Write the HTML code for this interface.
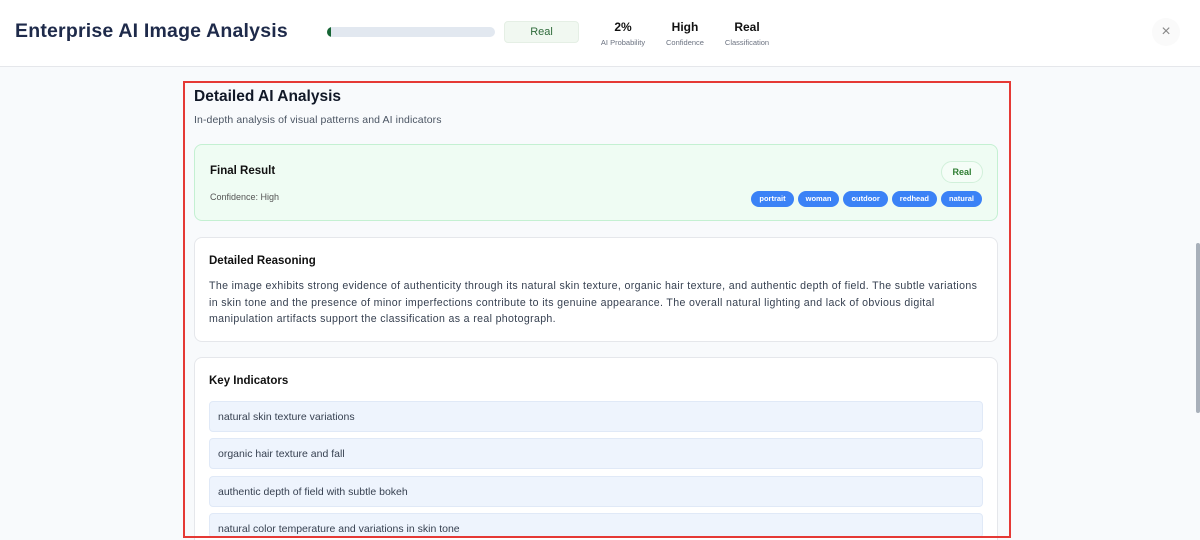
<!DOCTYPE html>
<html style="width:1200px;height:540px;overflow:hidden"><head><style>
*{box-sizing:border-box;margin:0;padding:0}
body{width:1200px;height:540px;overflow:hidden;background:#f8fafc;font-family:"Liberation Sans",sans-serif;color:#1f2937;position:relative}
.hdr{position:absolute;left:0;top:0;width:1200px;height:67px;background:#fff;border-bottom:1px solid #e5e7eb}
.abs{position:absolute}
.title{left:15px;top:20px;font-size:19.5px;font-weight:bold;color:#1e2a4a;letter-spacing:0.2px}
.bar{left:327px;top:27px;width:168px;height:10px;background:#e2e8f0;border-radius:5px;overflow:hidden}
.bar i{display:block;width:4px;height:10px;background:#166534}
.pill{left:504px;top:21px;width:75px;height:22px;background:#f1f8f1;border:1px solid #e5efe5;border-radius:4px;font-size:11px;color:#2f6b3b;text-align:center;line-height:20px}
.stat{top:20px;text-align:center;width:70px}
.stat b{display:block;font-size:12px;color:#111}
.stat span{display:block;font-size:7.5px;color:#6b7280;margin-top:4px}
.box{left:183px;top:81px;width:828px;height:457px;border:2px solid #e53935}
.card{position:absolute;left:194px;width:804px;border-radius:8px;overflow:hidden}
.tag{display:inline-block;background:#3b82f6;color:#fff;font-size:7.5px;font-weight:bold;border-radius:8px;padding:0 8px;height:16px;line-height:16px;margin-left:4px}
.ind{position:absolute;left:209px;width:774px;height:31px;background:#eef4fd;border:1px solid #e0e9f7;border-radius:4px;font-size:10.5px;color:#374151;padding-left:8px;line-height:30px}
</style></head><body>
<div class="hdr">
<div class="abs title">Enterprise AI Image Analysis</div>
<div class="abs bar"><i></i></div>
<div class="abs pill">Real</div>
<div class="abs stat" style="left:588px"><b>2%</b><span>AI Probability</span></div>
<div class="abs stat" style="left:650px"><b>High</b><span>Confidence</span></div>
<div class="abs stat" style="left:712px"><b>Real</b><span>Classification</span></div>
<div class="abs" style="left:1152px;top:18px;width:28px;height:28px;border-radius:14px;background:#fafafa;color:#888;font-size:16px;text-align:center;line-height:28px">×</div>
</div>
<div class="abs" style="left:1196px;top:243px;width:4px;height:170px;background:#a8b0ba;border-radius:2px"></div>
<div class="abs" style="left:194px;top:88px;font-size:15.5px;font-weight:bold;color:#111827">Detailed AI Analysis</div>
<div class="abs" style="left:194px;top:114px;font-size:10.5px;color:#4b5563;letter-spacing:0.1px">In-depth analysis of visual patterns and AI indicators</div>
<div class="card" style="top:144px;height:77px;background:#effcf3;border:1.5px solid #c4f0d2">
<div class="abs" style="left:15px;top:20px;font-size:11.5px;font-weight:bold;color:#111">Final Result</div>
<div class="abs" style="left:15px;top:47px;font-size:9px;color:#555">Confidence: High</div>
<div class="abs" style="right:14px;top:16px;width:42px;height:22px;border:1px solid #d1f0da;background:#f5fdf7;border-radius:11px;font-size:9px;font-weight:bold;color:#2e7d32;text-align:center;line-height:20px">Real</div>
<div class="abs" style="right:15px;top:43px"><span class="tag">portrait</span><span class="tag">woman</span><span class="tag">outdoor</span><span class="tag">redhead</span><span class="tag">natural</span></div>
</div>
<div class="card" style="top:237px;height:105px;background:#fff;border:1px solid #e5e7eb">
<div class="abs" style="left:14px;top:17px;font-size:11.5px;font-weight:bold;color:#111">Detailed Reasoning</div>
<div class="abs" style="left:14px;top:40px;width:772px;font-size:10.6px;line-height:16.5px;color:#374151;letter-spacing:0.35px">The image exhibits strong evidence of authenticity through its natural skin texture, organic hair texture, and authentic depth of field. The subtle variations in skin tone and the presence of minor imperfections contribute to its genuine appearance. The overall natural lighting and lack of obvious digital manipulation artifacts support the classification as a real photograph.</div>
</div>
<div class="card" style="top:357px;height:183px;background:#fff;border:1px solid #e5e7eb;border-bottom:none;border-radius:8px 8px 0 0">
<div class="abs" style="left:14px;top:17px;font-size:11.5px;font-weight:bold;color:#111">Key Indicators</div>
</div>
<div class="ind" style="top:401px">natural skin texture variations</div>
<div class="ind" style="top:438px">organic hair texture and fall</div>
<div class="ind" style="top:476px">authentic depth of field with subtle bokeh</div>
<div class="ind" style="top:513px;height:25px">natural color temperature and variations in skin tone</div>
<div class="abs box"></div>
</body></html>
